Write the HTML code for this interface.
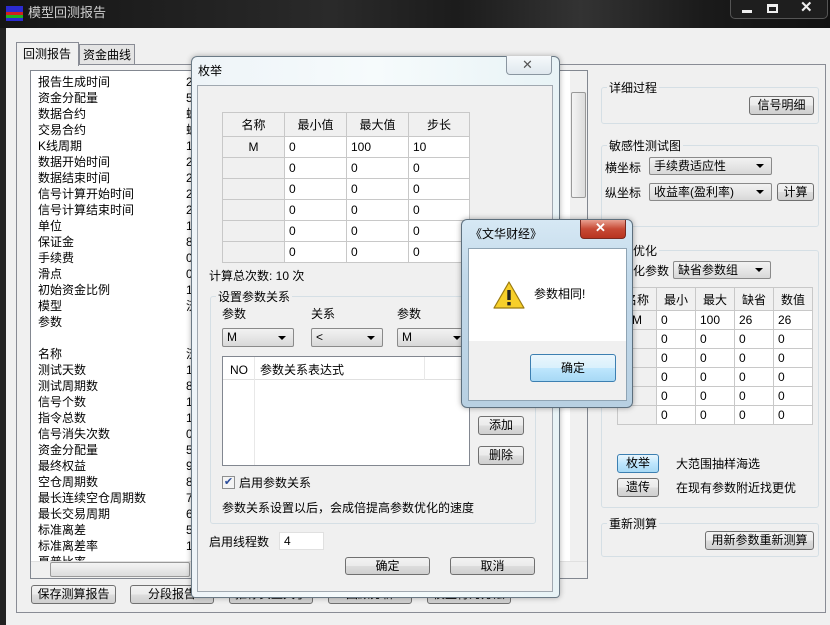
<!DOCTYPE html>
<html><head><meta charset="utf-8"><style>
*{box-sizing:border-box;margin:0;padding:0}
body{width:830px;height:625px;overflow:hidden;background:#f0f0f0;font-family:"Liberation Sans","WenQuanYi Zen Hei","Noto Sans CJK SC",sans-serif;font-size:12px;color:#000;position:relative}
.a{position:absolute}
.t{position:absolute;white-space:nowrap;line-height:14px}
.btn{position:absolute;border:1px solid #707070;border-radius:3px;background:linear-gradient(#f2f2f2,#ebebeb 50%,#dddddd 51%,#cfcfcf);text-align:center;white-space:nowrap;font-size:12px}
.cb{position:absolute;border:1px solid #8a8a8a;border-radius:2px;background:linear-gradient(#f2f2f2,#e6e6e6 50%,#d8d8d8);white-space:nowrap;padding-left:4px;font-size:12px}
.cb:after{content:"";position:absolute;right:7px;top:50%;margin-top:-2px;border-left:4px solid transparent;border-right:4px solid transparent;border-top:4px solid #000}
.grp{position:absolute;border:1px solid #d5dfe5;border-radius:3px}
.gl{position:absolute;background:#f0f0f0;padding:0 2px;white-space:nowrap}
table{border-collapse:collapse;position:absolute}
td{border:1px solid #c8c8c8;padding:0 0 0 4px;white-space:nowrap;background:#fff}
td.h{background:#f0f0f0;text-align:center;padding:0}
</style></head><body>
<div class="a" style="left:0;top:0;width:830px;height:28px;background:linear-gradient(90deg,#151515,#2a2a2a 40%,#1c1c1c 55%,#333 70%,#1a1a1a 85%,#111)"></div>
<div class="a" style="left:6px;top:6px;width:17px;height:15px;background:linear-gradient(#2b2bd0 0 40%,#d02020 40% 60%,#20b020 60% 80%,#2b2bd0 80%)"></div>
<div class="t" style="left:28px;top:6px;color:#cfcfcf;font-size:13px">模型回测报告</div>
<div class="a" style="left:730px;top:0;width:98px;height:19px;border:1px solid #555;border-top:none;border-radius:0 0 5px 5px;background:#1e1e1e"></div>
<div class="a" style="left:742px;top:10px;width:10px;height:3px;background:#eee"></div>
<div class="a" style="left:767px;top:4px;width:11px;height:9px;border:2px solid #eee;border-top-width:3px"></div>
<div class="t" style="left:800px;top:1px;color:#eee;font-size:15px;font-weight:bold">✕</div>
<div class="a" style="left:0;top:28px;width:6px;height:597px;background:#222"></div>
<div class="a" style="left:16px;top:64px;width:810px;height:549px;border:1px solid #898c95;background:#fff"></div>
<div class="a" style="left:17px;top:65px;width:808px;height:547px;background:#f0f0f0"></div>
<div class="a" style="left:16px;top:42px;width:63px;height:24px;border:1px solid #898c95;border-bottom:none;background:#f0f0f0"></div>
<div class="t" style="left:23px;top:47px">回测报告</div>
<div class="a" style="left:79px;top:44px;width:56px;height:20px;border:1px solid #898c95;border-bottom:none;background:#e4e4e4"></div>
<div class="t" style="left:83px;top:48px">资金曲线</div>
<div class="a" style="left:30px;top:70px;width:558px;height:509px;border:1px solid #828790;background:#fff"></div>
<div class="a" style="left:38px;top:74px;line-height:16px;font-size:12px">报告生成时间<br>资金分配量<br>数据合约<br>交易合约<br>K线周期<br>数据开始时间<br>数据结束时间<br>信号计算开始时间<br>信号计算结束时间<br>单位<br>保证金<br>手续费<br>滑点<br>初始资金比例<br>模型<br>参数<br><br>名称<br>测试天数<br>测试周期数<br>信号个数<br>指令总数<br>信号消失次数<br>资金分配量<br>最终权益<br>空仓周期数<br>最长连续空仓周期数<br>最长交易周期<br>标准离差<br>标准离差率<br>夏普比率</div>
<div class="a" style="left:186px;top:74px;line-height:16px;font-size:12px;width:5px;overflow:hidden">2<br>5<br>螺<br>螺<br>1<br>2<br>2<br>2<br>2<br>1<br>8<br>0<br>0<br>1<br>沃<br><br><br>沃<br>1<br>8<br>1<br>1<br>0<br>5<br>9<br>8<br>7<br>6<br>5<br>1</div>
<div class="a" style="left:31px;top:561px;width:556px;height:17px;background:#f0f0f0;border-top:1px solid #e0e0e0"></div>
<div class="a" style="left:50px;top:562px;width:140px;height:15px;border:1px solid #999;border-radius:2px;background:linear-gradient(#f4f4f4,#dcdcdc)"></div>
<div class="a" style="left:570px;top:71px;width:17px;height:490px;background:#f0f0f0"></div>
<div class="a" style="left:571px;top:92px;width:15px;height:106px;border:1px solid #999;border-radius:2px;background:linear-gradient(90deg,#f4f4f4,#dcdcdc)"></div>
<div class="btn" style="left:31px;top:585px;width:85px;height:19px;line-height:17px">保存测算报告</div>
<div class="btn" style="left:130px;top:585px;width:84px;height:19px;line-height:17px">分段报告</div>
<div class="btn" style="left:229px;top:585px;width:84px;height:19px;line-height:17px">推荐实盘天子</div>
<div class="btn" style="left:328px;top:585px;width:84px;height:19px;line-height:17px">回顾分析</div>
<div class="btn" style="left:427px;top:585px;width:84px;height:19px;line-height:17px">模型行为方法</div>
<div class="grp" style="left:601px;top:87px;width:218px;height:37px"></div>
<div class="gl" style="left:607px;top:79px">详细过程</div>
<div class="btn" style="left:749px;top:96px;width:65px;height:19px;line-height:17px">信号明细</div>
<div class="grp" style="left:601px;top:145px;width:218px;height:82px"></div>
<div class="gl" style="left:607px;top:137px">敏感性测试图</div>
<div class="t" style="left:605px;top:161px">横坐标</div>
<div class="cb" style="left:649px;top:157px;width:123px;height:18px;line-height:16px">手续费适应性</div>
<div class="t" style="left:605px;top:186px">纵坐标</div>
<div class="cb" style="left:649px;top:183px;width:123px;height:18px;line-height:16px">收益率(盈利率)</div>
<div class="btn" style="left:777px;top:183px;width:37px;height:18px;line-height:16px">计算</div>
<div class="grp" style="left:601px;top:250px;width:218px;height:258px"></div>
<div class="gl" style="left:607px;top:242px">参数优化</div>
<div class="t" style="left:621px;top:264px">优化参数</div>
<div class="cb" style="left:673px;top:261px;width:98px;height:18px;line-height:16px">缺省参数组</div>
<table style="left:617px;top:287px;width:196px">
<tr style="height:23px"><td class="h" style="width:39px">名称</td><td class="h" style="width:39px">最小</td><td class="h" style="width:39px">最大</td><td class="h" style="width:39px">缺省</td><td class="h">数值</td></tr>
<tr style="height:19px"><td class="h">M</td><td>0</td><td>100</td><td>26</td><td>26</td></tr>
<tr style="height:19px"><td class="h"></td><td>0</td><td>0</td><td>0</td><td>0</td></tr>
<tr style="height:19px"><td class="h"></td><td>0</td><td>0</td><td>0</td><td>0</td></tr>
<tr style="height:19px"><td class="h"></td><td>0</td><td>0</td><td>0</td><td>0</td></tr>
<tr style="height:19px"><td class="h"></td><td>0</td><td>0</td><td>0</td><td>0</td></tr>
<tr style="height:19px"><td class="h"></td><td>0</td><td>0</td><td>0</td><td>0</td></tr>
</table>
<div class="btn" style="left:617px;top:454px;width:42px;height:19px;line-height:17px;border-color:#3c7fb1;background:linear-gradient(#eaf6fd,#bee6fd 50%,#a7d9f5)">枚举</div>
<div class="t" style="left:676px;top:457px">大范围抽样海选</div>
<div class="btn" style="left:617px;top:478px;width:42px;height:19px;line-height:17px">遗传</div>
<div class="t" style="left:676px;top:481px">在现有参数附近找更优</div>
<div class="grp" style="left:601px;top:523px;width:218px;height:34px"></div>
<div class="gl" style="left:607px;top:515px">重新测算</div>
<div class="btn" style="left:705px;top:531px;width:109px;height:19px;line-height:17px">用新参数重新测算</div>
<div class="a" style="left:191px;top:56px;width:369px;height:542px;border:1px solid #6b7a86;border-radius:6px 6px 4px 4px;background:linear-gradient(90deg,#eef4f8,#f6fbfc 50%,#e8f3f6);box-shadow:0 0 6px rgba(0,0,0,.3)"></div>
<div class="t" style="left:198px;top:64px">枚举</div>
<div class="a" style="left:506px;top:56px;width:46px;height:19px;border:1px solid #8a96a0;border-top:none;border-radius:0 0 4px 4px;background:linear-gradient(#f6f9fb,#dfe8ee)"></div>
<div class="t" style="left:522px;top:58px;color:#555;font-size:13px">✕</div>
<div class="a" style="left:197px;top:85px;width:356px;height:507px;border:1px solid #a0a8b0;background:#f0f0f0"></div>
<table style="left:222px;top:112px;width:248px">
<tr style="height:24px"><td class="h" style="width:62px">名称</td><td class="h" style="width:62px">最小值</td><td class="h" style="width:62px">最大值</td><td class="h">步长</td></tr>
<tr style="height:21px"><td class="h">M</td><td>0</td><td>100</td><td>10</td></tr>
<tr style="height:21px"><td class="h"></td><td>0</td><td>0</td><td>0</td></tr>
<tr style="height:21px"><td class="h"></td><td>0</td><td>0</td><td>0</td></tr>
<tr style="height:21px"><td class="h"></td><td>0</td><td>0</td><td>0</td></tr>
<tr style="height:21px"><td class="h"></td><td>0</td><td>0</td><td>0</td></tr>
<tr style="height:21px"><td class="h"></td><td>0</td><td>0</td><td>0</td></tr>
</table>
<div class="t" style="left:209px;top:269px">计算总次数: 10 次</div>
<div class="grp" style="left:210px;top:296px;width:326px;height:228px"></div>
<div class="gl" style="left:216px;top:288px">设置参数关系</div>
<div class="t" style="left:222px;top:307px">参数</div>
<div class="t" style="left:311px;top:307px">关系</div>
<div class="t" style="left:397px;top:307px">参数</div>
<div class="cb" style="left:222px;top:328px;width:72px;height:19px;line-height:17px">M</div>
<div class="cb" style="left:311px;top:328px;width:72px;height:19px;line-height:17px">&lt;</div>
<div class="cb" style="left:397px;top:328px;width:72px;height:19px;line-height:17px">M</div>
<div class="a" style="left:222px;top:356px;width:248px;height:110px;border:1px solid #828790;background:#fff"></div>
<div class="a" style="left:223px;top:357px;width:246px;height:23px;border-bottom:1px solid #e0e0e0"></div>
<div class="a" style="left:254px;top:357px;width:1px;height:108px;background:#e8e8e8"></div>
<div class="a" style="left:424px;top:357px;width:1px;height:23px;background:#e8e8e8"></div>
<div class="t" style="left:230px;top:363px">NO</div>
<div class="t" style="left:260px;top:363px">参数关系表达式</div>
<div class="btn" style="left:478px;top:416px;width:46px;height:19px;line-height:17px">添加</div>
<div class="btn" style="left:478px;top:446px;width:46px;height:19px;line-height:17px">删除</div>
<div class="a" style="left:222px;top:476px;width:13px;height:13px;border:1px solid #8e8f8f;background:#f4f4f4;color:#2a4c9a;font-size:11px;line-height:11px;text-align:center">✔</div>
<div class="t" style="left:239px;top:476px">启用参数关系</div>
<div class="t" style="left:222px;top:501px">参数关系设置以后，会成倍提高参数优化的速度</div>
<div class="t" style="left:209px;top:535px">启用线程数</div>
<div class="a" style="left:279px;top:532px;width:45px;height:18px;border:1px solid #e0e0e0;background:#fff;padding-left:4px;line-height:16px">4</div>
<div class="btn" style="left:345px;top:557px;width:85px;height:18px;line-height:16px">确定</div>
<div class="btn" style="left:450px;top:557px;width:85px;height:18px;line-height:16px">取消</div>
<div class="a" style="left:461px;top:219px;width:172px;height:189px;border:1px solid #5d6f7d;border-radius:6px;background:linear-gradient(#d6e8f4,#c2d9ea 30%,#b8d0e2);box-shadow:0 0 6px rgba(0,0,0,.35)"></div>
<div class="t" style="left:470px;top:227px">《文华财经》</div>
<div class="a" style="left:580px;top:220px;width:46px;height:19px;border:1px solid #7a2a20;border-top:none;border-radius:0 0 4px 4px;background:linear-gradient(#e8a090,#c74a35 50%,#b83420)"></div>
<div class="t" style="left:595px;top:221px;color:#fff;font-size:13px;font-weight:bold">✕</div>
<div class="a" style="left:468px;top:248px;width:159px;height:153px;border:1px solid #8fa4b4;background:#f0f0f0"></div>
<div class="a" style="left:469px;top:249px;width:157px;height:92px;background:#fff"></div>
<svg class="a" style="left:493px;top:281px" width="32" height="29" viewBox="0 0 32 29"><path d="M16 1 L31 27 L1 27 Z" fill="#f7cf2a" stroke="#9a7a10" stroke-width="1.2" stroke-linejoin="round"/><rect x="14.3" y="9" width="3.4" height="10" fill="#222"/><rect x="14.3" y="21" width="3.4" height="3.4" fill="#222"/></svg>
<div class="t" style="left:534px;top:287px">参数相同!</div>
<div class="btn" style="left:530px;top:354px;width:86px;height:28px;line-height:26px;border-color:#3c7fb1;background:linear-gradient(#eaf6fd,#d9f0fc 50%,#bee6fd 51%,#a7d9f5)">确定</div>
</body></html>
